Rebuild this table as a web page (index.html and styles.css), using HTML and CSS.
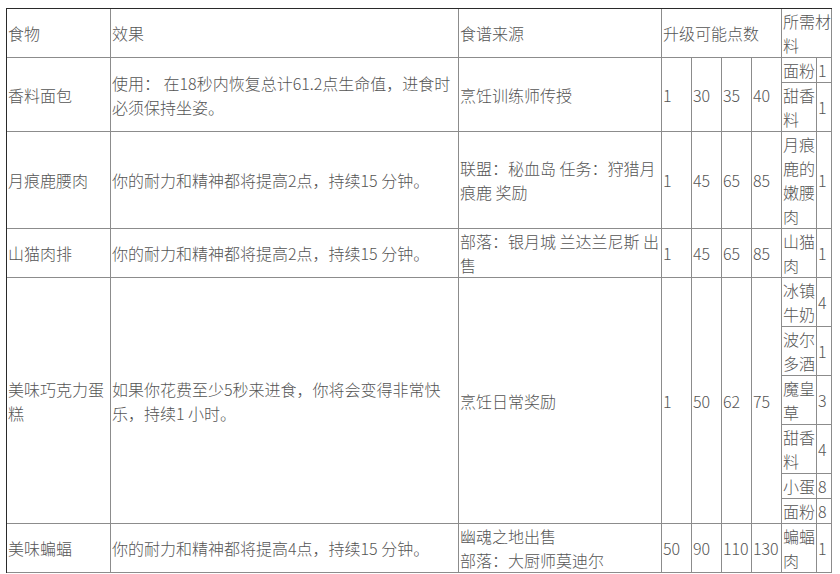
FILE: index.html
```html
<!DOCTYPE html>
<html lang="zh-CN">
<head>
<meta charset="utf-8">
<title>烹饪食谱</title>
<link rel="stylesheet" href="styles.css">
</head>
<body>
<table class="recipes">
  <colgroup>
    <col class="c-food">
    <col class="c-effect">
    <col class="c-source">
    <col class="c-pt">
    <col class="c-pt">
    <col class="c-pt">
    <col class="c-pt">
    <col class="c-mat">
    <col class="c-qty">
  </colgroup>
  <tr>
    <td>食物</td>
    <td>效果</td>
    <td>食谱来源</td>
    <td colspan="4">升级可能点数</td>
    <td colspan="2">所需材料</td>
  </tr>
  <tr>
    <td rowspan="2">香料面包</td>
    <td rowspan="2">使用： 在18秒内恢复总计61.2点生命值，进食时必须保持坐姿。</td>
    <td rowspan="2">烹饪训练师传授</td>
    <td rowspan="2">1</td>
    <td rowspan="2">30</td>
    <td rowspan="2">35</td>
    <td rowspan="2">40</td>
    <td>面粉</td>
    <td>1</td>
  </tr>
  <tr>
    <td>甜香料</td>
    <td>1</td>
  </tr>
  <tr>
    <td>月痕鹿腰肉</td>
    <td>你的耐力和精神都将提高2点，持续15 分钟。</td>
    <td>联盟：秘血岛 任务：狩猎月痕鹿 奖励</td>
    <td>1</td>
    <td>45</td>
    <td>65</td>
    <td>85</td>
    <td>月痕鹿的嫩腰肉</td>
    <td>1</td>
  </tr>
  <tr>
    <td>山猫肉排</td>
    <td>你的耐力和精神都将提高2点，持续15 分钟。</td>
    <td>部落：银月城 兰达兰尼斯 出售</td>
    <td>1</td>
    <td>45</td>
    <td>65</td>
    <td>85</td>
    <td>山猫肉</td>
    <td>1</td>
  </tr>
  <tr>
    <td rowspan="6">美味巧克力蛋糕</td>
    <td rowspan="6">如果你花费至少5秒来进食，你将会变得非常快乐，持续1 小时。</td>
    <td rowspan="6">烹饪日常奖励</td>
    <td rowspan="6">1</td>
    <td rowspan="6">50</td>
    <td rowspan="6">62</td>
    <td rowspan="6">75</td>
    <td>冰镇牛奶</td>
    <td>4</td>
  </tr>
  <tr>
    <td>波尔多酒</td>
    <td>1</td>
  </tr>
  <tr>
    <td>魔皇草</td>
    <td>3</td>
  </tr>
  <tr>
    <td>甜香料</td>
    <td>4</td>
  </tr>
  <tr>
    <td>小蛋</td>
    <td>8</td>
  </tr>
  <tr>
    <td>面粉</td>
    <td>8</td>
  </tr>
  <tr>
    <td>美味蝙蝠</td>
    <td>你的耐力和精神都将提高4点，持续15 分钟。</td>
    <td>幽魂之地出售<br>部落：大厨师莫迪尔</td>
    <td>50</td>
    <td>90</td>
    <td>110</td>
    <td>130</td>
    <td>蝙蝠肉</td>
    <td>1</td>
  </tr>
</table>
</body>
</html>
```

FILE: styles.css
```css
html, body {
  background: #ffffff;
}

body {
  margin: 8px 0 0 6px;
  font-family: "Noto Sans CJK SC", "Microsoft YaHei", sans-serif;
  font-size: 16px;
  font-weight: 300;
  line-height: 24px;
  color: #555555;
}

.recipes {
  table-layout: fixed;
  width: 826px;
  border-collapse: separate;
  border-spacing: 0;
  border-left: 1px solid #2a2a2a;
  border-top: 1px solid #2a2a2a;
}

.recipes td {
  box-sizing: border-box;
  padding: 0 0 0 1px;
  border-right: 1px solid #8c8c8c;
  border-bottom: 1px solid #8c8c8c;
  vertical-align: middle;
  text-align: left;
  word-break: normal;
  overflow: hidden;
  white-space: normal;
}

.c-food { width: 104px; }
.c-effect { width: 348px; }
.c-source { width: 203px; }
.c-pt { width: 30px; }
.c-mat { width: 35px; }
.c-qty { width: 15px; }
```
